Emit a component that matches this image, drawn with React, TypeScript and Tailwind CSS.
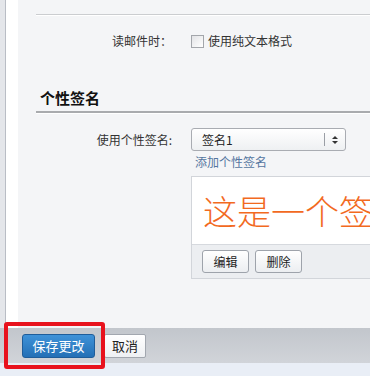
const font = { fontFamily: '"Noto Sans CJK SC", "Liberation Sans", sans-serif' }

function Btn({ children, className = "" }: { children: React.ReactNode; className?: string }) {
  return (
    <div
      className={`flex h-[23px] w-[47px] items-center justify-center rounded-[3px] border border-[#9ea3ab] bg-gradient-to-b from-white to-[#eceef1] text-[12px] text-[#222] ${className}`}
    >
      {children}
    </div>
  )
}

export default function App() {
  return (
    <div className="relative flex h-[376px] w-[370px] flex-col overflow-hidden bg-[#e9eef6]" style={font}>
      <div className="flex h-[328px]">
        <div className="w-[6px] shrink-0 border-r border-[#b9bdc5] bg-[#e4e6ea]" />
        <div className="w-[12px] shrink-0 bg-white" />
        <div className="min-w-0 flex-1 bg-[#f4f5f7]">
          <div className="ml-[18px] mt-[14px] h-[2px] border-t border-[#cbcdd0] bg-white" />

          <div className="mt-[13px] flex h-[24px] items-center">
            <div className="w-[154px] text-right text-[12px] text-[#333]">读邮件时：</div>
            <div className="ml-[19px] flex items-center">
              <div className="h-[13px] w-[13px] border border-[#a3a6ab] bg-gradient-to-br from-[#e2e3e6] to-white" />
              <span className="ml-[4px] text-[12px] text-[#333]">使用纯文本格式</span>
            </div>
          </div>

          <div className="ml-[22px] mt-[35px] text-[15px] font-bold leading-[20px] text-[#111]">个性签名</div>
          <div className="ml-[18px] mt-[3px] h-[3px] border-t-2 border-[#a9abae] bg-white" />

          <div className="mt-[14px] flex h-[23px] items-center">
            <div className="w-[154px] text-right text-[12px] text-[#333]">使用个性签名:</div>
            <div className="ml-[19px] flex h-[23px] w-[155px] items-center rounded-[3px] border border-[#a9acb2] bg-gradient-to-b from-white to-[#eef0f2]">
              <span className="ml-[10px] flex-1 text-[12px] text-[#222]">签名1</span>
              <div className="h-[13px] w-px bg-[#9a9ea5]" />
              <div className="flex w-[20px] flex-col items-center justify-center gap-[2px]">
                <div className="h-0 w-0 border-x-[3px] border-b-[3px] border-x-transparent border-b-[#333]" />
                <div className="h-0 w-0 border-x-[3px] border-t-[3px] border-x-transparent border-t-[#333]" />
              </div>
            </div>
          </div>

          <div className="ml-[177px] mt-[3px] text-[12px] leading-[16px] text-[#5576a0]">添加个性签名</div>

          <div className="ml-[173px] mt-[6px] w-[260px] border border-[#d2d5da]">
            <div className="flex h-[67px] items-center bg-white pl-[11px]">
              <span className="whitespace-nowrap text-[34px] font-light leading-none text-[#f26a1f]">这是一个签名</span>
            </div>
            <div className="flex h-[34px] gap-[6px] border-t border-[#d6d9de] bg-[#eceef1] pl-[10px] pt-[5px]">
              <Btn>编辑</Btn>
              <Btn>删除</Btn>
            </div>
          </div>
        </div>
      </div>

      <div className="flex h-[35px] items-center gap-[9px] bg-gradient-to-b from-[#c2c6cc] to-[#d1d4d9] pl-[22px]">
        <div className="flex h-[24px] w-[73px] items-center justify-center rounded-[3px] border border-[#1f5d9a] bg-gradient-to-b from-[#3f92d8] to-[#2470b6] text-[13px] text-white">
          保存更改
        </div>
        <div className="flex h-[24px] w-[42px] items-center justify-center rounded-[2px] border border-[#a2a7af] bg-gradient-to-b from-white to-[#eef0f3] text-[13px] text-[#222]">
          取消
        </div>
      </div>

      <div className="absolute left-[4px] top-[322px] h-[47px] w-[101px] rounded-[3px] border-[4px] border-[#e8121d]" />
    </div>
  )
}
